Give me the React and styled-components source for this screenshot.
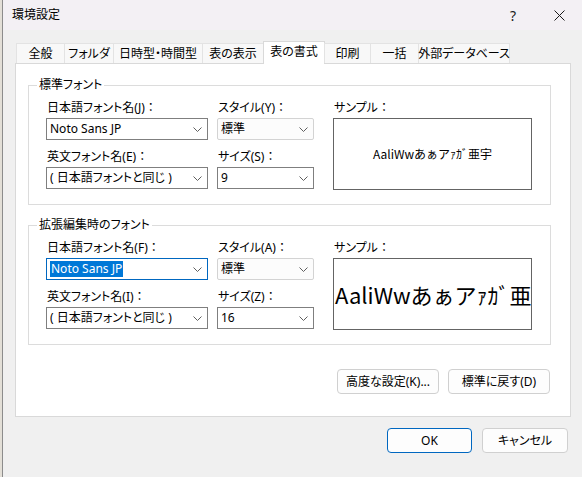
import React from 'react'
import styled, { createGlobalStyle } from 'styled-components'

const GlobalStyle = createGlobalStyle`
  html, body {
    margin: 0;
    padding: 0;
  }
  body {
    font-family: "Noto Sans", "Noto Sans CJK JP", sans-serif;
    font-size: 12px;
    color: #000;
    background: #f0f0f0;
    font-feature-settings: "palt";
  }
`;

const Page = styled.div`
  display: flex;
  width: 582px;
  height: 477px;
  overflow: hidden;
`;

const Edge = styled.div`
  width: 2px;
  background: #e3dfd7;
  border-right: 1px solid #8c8c8c;
`;

const Dialog = styled.div`
  flex: 1;
  display: flex;
  flex-direction: column;
  background: #f0f0f0;
`;

const TitleBar = styled.div`
  height: 30px;
  display: flex;
  align-items: center;
  background: #f3f0f4;
  padding-left: 9px;
`;

const Title = styled.div`
  flex: 1;
  line-height: 16px;
`;

const CaptionButton = styled.div`
  width: 46px;
  height: 30px;
  display: flex;
  align-items: center;
  justify-content: center;
  font-size: 14px;
  color: #1a1a1a;
`;

const Body = styled.div`
  flex: 1;
  display: flex;
  flex-direction: column;
  padding: 11px 11px 0 12px;
`;

const TabStrip = styled.div`
  display: flex;
  align-items: flex-end;
  height: 23px;
  padding-left: 2px;
  margin-bottom: -1px;
  position: relative;
  z-index: 1;
`;

const Tab = styled.div`
  box-sizing: border-box;
  width: ${({ $w }) => $w}px;
  height: ${({ $active }) => ($active ? 23 : 20)}px;
  margin-bottom: ${({ $active }) => ($active ? 0 : 1)}px;
  margin-left: -1px;
  border: 1px solid ${({ $active }) => ($active ? '#d9d9d9' : '#e3e3e3')};
  border-bottom: none;
  background: ${({ $active }) => ($active ? '#fff' : '#f8f8f8')};
  display: flex;
  align-items: center;
  justify-content: center;
  padding-bottom: ${({ $active }) => ($active ? 2 : 0)}px;
  line-height: 16px;
  white-space: nowrap;
`;

const Panel = styled.div`
  box-sizing: border-box;
  height: 354px;
  display: flex;
  flex-direction: column;
  background: #fff;
  border: 1px solid #d9d9d9;
  padding: 13px 19px 22px 12px;
`;

const Group = styled.fieldset`
  margin: 0;
  min-width: 0;
  border: 1px solid #dcdcdc;
  padding: 7px 17px 14px 17px;

  & + & {
    margin-top: 12px;
  }
`;

const Caption = styled.legend`
  padding: 0 2px;
  margin-left: -9px;
  line-height: 16px;
`;

const GroupRow = styled.div`
  display: flex;
  gap: 9px;
`;

const Col = styled.div`
  width: ${({ $w }) => $w}px;
  display: flex;
  flex-direction: column;
  gap: 9px;
  margin-left: ${({ $ml }) => $ml || 0}px;
`;

const Field = styled.div`
  display: flex;
  flex-direction: column;
  gap: 2px;
`;

const Label = styled.div`
  line-height: 16px;
  padding-left: 1px;
  white-space: nowrap;
`;

const Colon = styled.span`
  font-feature-settings: normal;
`;

const Combo = styled.div`
  box-sizing: border-box;
  height: 22px;
  display: flex;
  align-items: center;
  padding: 0 5px 0 3px;
  border: 1px solid
    ${({ $focus, $list }) => ($focus ? '#0067c0' : $list ? '#d3d3d3' : '#7f7f7f')};
  background: ${({ $list }) => ($list ? '#fcfcfc' : '#fff')};
  border-radius: ${({ $list }) => ($list ? 2 : 0)}px;
`;

const ComboText = styled.span`
  flex: 1;
  line-height: 16px;
  white-space: nowrap;
  overflow: hidden;
`;

const Selected = styled.span`
  background: #0078d7;
  color: #fff;
  padding: 0 1px;
`;

const SampleBox = styled.div`
  box-sizing: border-box;
  height: 72px;
  border: 1px solid #646464;
  background: #fff;
  display: flex;
  align-items: center;
  justify-content: ${({ $big }) => ($big ? 'flex-start' : 'center')};
  padding-left: ${({ $big }) => ($big ? 1 : 0)}px;
  overflow: hidden;
  white-space: nowrap;
  font-family: "Noto Sans CJK JP", sans-serif;
  font-feature-settings: normal;
  font-size: ${({ $big }) => ($big ? 22 : 12)}px;
  line-height: 1.2;
`;

const ActionRow = styled.div`
  margin-top: auto;
  display: flex;
  justify-content: flex-end;
  gap: 9px;
  padding-right: 1px;
`;

const Button = styled.button`
  box-sizing: border-box;
  width: ${({ $w }) => $w}px;
  height: 25px;
  padding: 0;
  font: inherit;
  line-height: 16px;
  color: #000;
  background: #fdfdfd;
  border: 1px solid ${({ $primary }) => ($primary ? '#0067c0' : '#d0d0d0')};
  border-radius: 4px;
`;

const Footer = styled.div`
  display: flex;
  justify-content: flex-end;
  gap: 10px;
  margin-top: 11px;
  padding-right: 3px;
`;

const Chevron = () => (
  <svg width="9" height="5" viewBox="0 0 9 5">
    <path d="M0.5 0.5 L4.5 4.5 L8.5 0.5" fill="none" stroke="#5f5f5f" strokeWidth="1" />
  </svg>
);

const CloseIcon = () => (
  <svg width="11" height="11" viewBox="0 0 11 11">
    <path d="M0.5 0.5 L10.5 10.5 M10.5 0.5 L0.5 10.5" stroke="#1a1a1a" strokeWidth="1" />
  </svg>
);

const tabs = [
  { label: '全般', w: 49 },
  { label: 'フォルダ', w: 50 },
  { label: '日時型・時間型', w: 90 },
  { label: '表の表示', w: 62 },
  { label: '表の書式', w: 62, active: true },
  { label: '印刷', w: 47 },
  { label: '一括', w: 49 },
  { label: '外部データベース', w: 92 },
];

const SAMPLE = 'AaliWwあぁアｧｶﾞ亜宇';

const FontGroup = ({ title, keys, size, big, focus }) => (
  <Group>
    <Caption>{title}</Caption>
    <GroupRow>
      <Col $w={162}>
        <Field>
          <Label>日本語フォント名({keys[0]})<Colon>：</Colon></Label>
          <Combo $focus={focus}>
            <ComboText>{focus ? <Selected>Noto Sans JP</Selected> : 'Noto Sans JP'}</ComboText>
            <Chevron />
          </Combo>
        </Field>
        <Field>
          <Label>英文フォント名({keys[1]})<Colon>：</Colon></Label>
          <Combo>
            <ComboText>( 日本語フォントと同じ )</ComboText>
            <Chevron />
          </Combo>
        </Field>
      </Col>
      <Col $w={97}>
        <Field>
          <Label>スタイル({keys[2]})<Colon>：</Colon></Label>
          <Combo $list>
            <ComboText>標準</ComboText>
            <Chevron />
          </Combo>
        </Field>
        <Field>
          <Label>サイズ({keys[3]})<Colon>：</Colon></Label>
          <Combo>
            <ComboText>{size}</ComboText>
            <Chevron />
          </Combo>
        </Field>
      </Col>
      <Col $w={199} $ml={10}>
        <Field>
          <Label>サンプル<Colon>：</Colon></Label>
          <SampleBox $big={big}>{SAMPLE}</SampleBox>
        </Field>
      </Col>
    </GroupRow>
  </Group>
);

const App = () => {
  return (
    <Page>
      <GlobalStyle />
      <Edge />
      <Dialog>
        <TitleBar>
          <Title>環境設定</Title>
          <CaptionButton>?</CaptionButton>
          <CaptionButton><CloseIcon /></CaptionButton>
        </TitleBar>
        <Body>
          <TabStrip>
            {tabs.map((t) => (
              <Tab key={t.label} $w={t.w} $active={t.active}>{t.label}</Tab>
            ))}
          </TabStrip>
          <Panel>
            <FontGroup title="標準フォント" keys={['J', 'E', 'Y', 'S']} size="9" />
            <FontGroup title="拡張編集時のフォント" keys={['F', 'I', 'A', 'Z']} size="16" big focus />
            <ActionRow>
              <Button $w={102}>高度な設定(K)...</Button>
              <Button $w={102}>標準に戻す(D)</Button>
            </ActionRow>
          </Panel>
          <Footer>
            <Button $w={85} $primary>OK</Button>
            <Button $w={86}>キャンセル</Button>
          </Footer>
        </Body>
      </Dialog>
    </Page>
  )
}

export default App;
